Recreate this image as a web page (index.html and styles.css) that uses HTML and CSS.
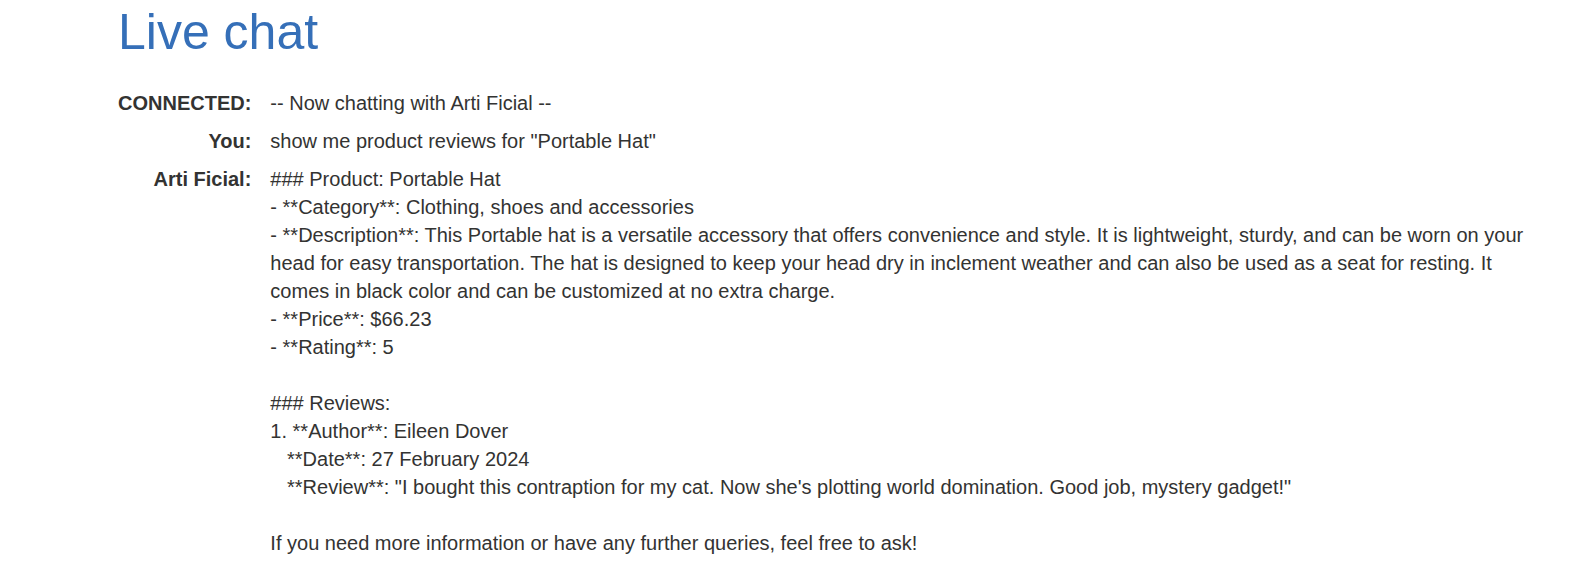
FILE: index.html
```html
<!DOCTYPE html>
<html lang="en">
<head>
<meta charset="utf-8">
<title>Live chat</title>
<link rel="stylesheet" href="styles.css">
</head>
<body>
<div class="container">
  <h1 class="title">Live chat</h1>
  <table class="chat">
    <tr>
      <th class="who">CONNECTED:</th>
      <td class="msg">-- Now chatting with Arti Ficial --</td>
    </tr>
    <tr>
      <th class="who">You:</th>
      <td class="msg">show me product reviews for "Portable Hat"</td>
    </tr>
    <tr>
      <th class="who">Arti Ficial:</th>
      <td class="msg">### Product: Portable Hat
- **Category**: Clothing, shoes and accessories
- **Description**: This Portable hat is a versatile accessory that offers convenience and style. It is lightweight, sturdy, and can be worn on your head for easy transportation. The hat is designed to keep your head dry in inclement weather and can also be used as a seat for resting. It comes in black color and can be customized at no extra charge.
- **Price**: $66.23
- **Rating**: 5

### Reviews:
1. **Author**: Eileen Dover
   **Date**: 27 February 2024
   **Review**: "I bought this contraption for my cat. Now she's plotting world domination. Good job, mystery gadget!"

If you need more information or have any further queries, feel free to ask!</td>
    </tr>
  </table>
</div>
</body>
</html>
```

FILE: styles.css
```css
html, body {
  margin: 0;
  padding: 0;
  background: #ffffff;
}

body {
  font-family: "Liberation Sans", Arial, sans-serif;
  color: #333332;
  font-size: 20px;
  line-height: 28px;
}

.container {
  padding: 4px 40px 0 118px;
}

.title {
  margin: 0;
  font-size: 50px;
  font-weight: normal;
  line-height: 57px;
  color: #356fb8;
}

.chat {
  border-collapse: collapse;
  margin-top: 23px;
}

.who {
  text-align: right;
  vertical-align: top;
  font-weight: bold;
  white-space: nowrap;
  padding: 5px 19px 5px 0;
}

.msg {
  text-align: left;
  vertical-align: top;
  white-space: pre-wrap;
  padding: 5px 0;
}
```
